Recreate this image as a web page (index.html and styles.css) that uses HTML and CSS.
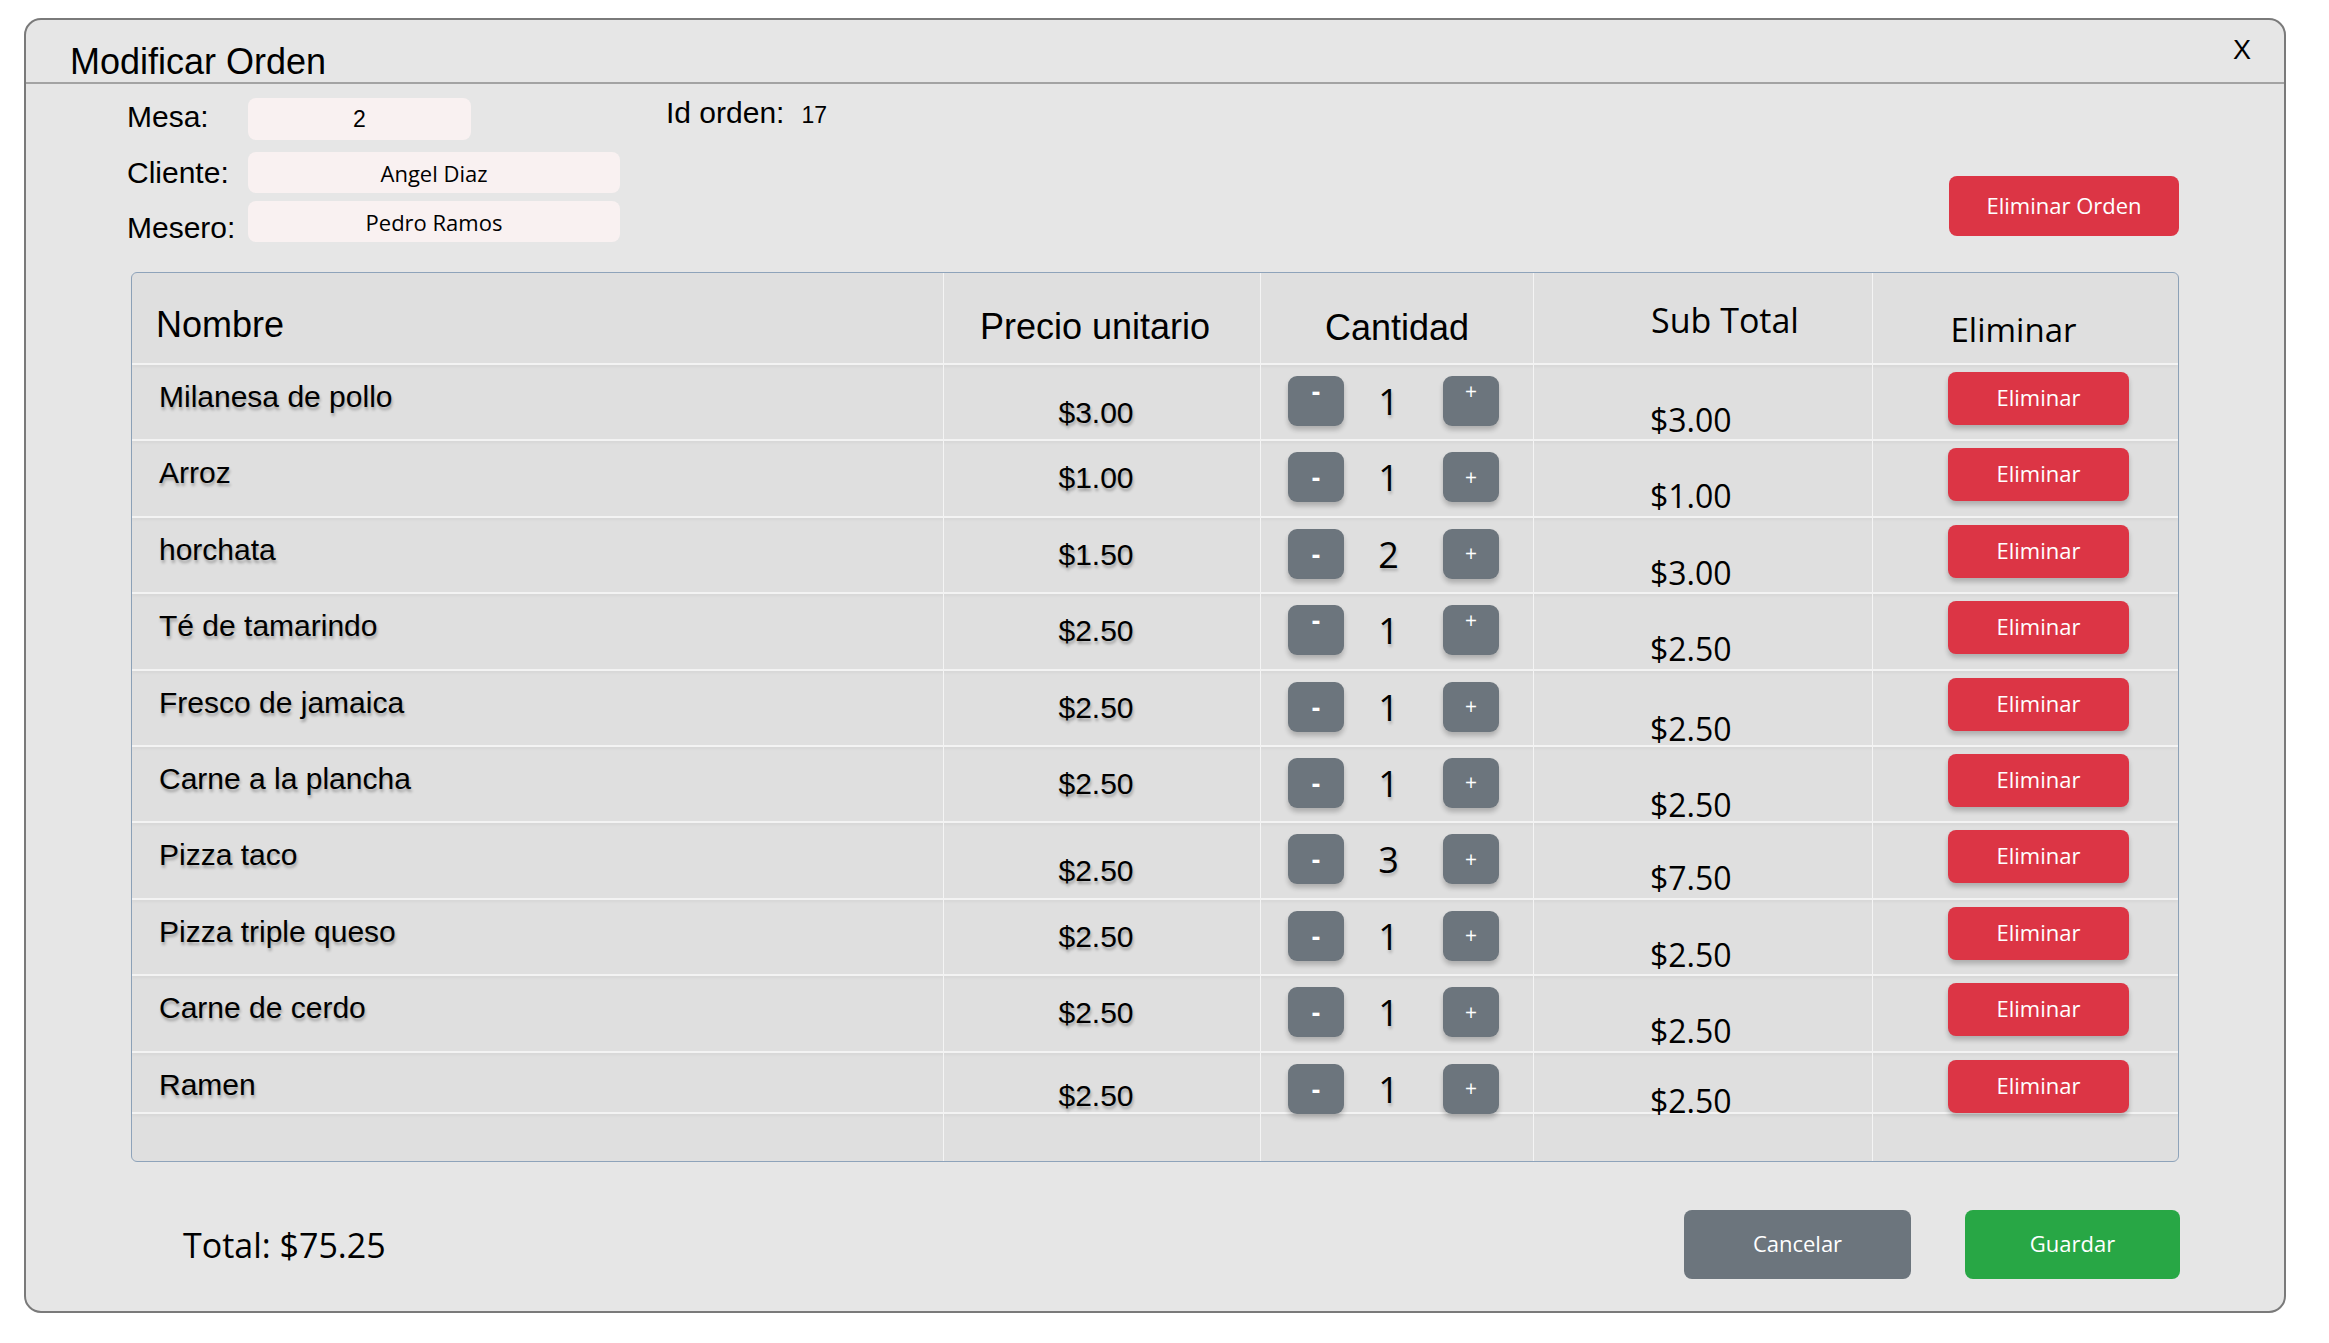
FILE: index.html
```html
<!DOCTYPE html>
<html lang="es">
<head>
<meta charset="utf-8">
<title>Modificar Orden</title>
<link rel="stylesheet" href="styles.css">
</head>
<body>
<div class="modal">
  <header class="modal-header">
    <h1 class="modal-title">Modificar Orden</h1>
    <span class="modal-close">X</span>
  </header>

  <section class="info">
    <div class="fields">
      <div class="field">
        <span class="field-label field-label--high">Mesa:</span>
        <span class="field-input field-input--short">2</span>
      </div>
      <div class="field field--gap-lg">
        <span class="field-label">Cliente:</span>
        <span class="field-input">Angel Diaz</span>
      </div>
      <div class="field field--gap-sm">
        <span class="field-label field-label--low">Mesero:</span>
        <span class="field-input">Pedro Ramos</span>
      </div>
    </div>
    <div class="order-id">
      <span class="order-id-label">Id orden:</span>
      <span class="order-id-value">17</span>
    </div>
    <button class="btn btn--danger btn--order">Eliminar Orden</button>
  </section>

  <div class="table">
    <div class="row row--head">
      <div class="cell"><span class="th th--name">Nombre</span></div>
      <div class="cell cell--center"><span class="th th--price">Precio unitario</span></div>
      <div class="cell cell--center"><span class="th th--qty">Cantidad</span></div>
      <div class="cell cell--center"><span class="th th--sub">Sub Total</span></div>
      <div class="cell cell--center"><span class="th th--del">Eliminar</span></div>
    </div>

    <div class="row">
      <div class="cell cell--name">Milanesa de pollo</div>
      <div class="cell cell--price cell--price-low">$3.00</div>
      <div class="cell cell--qty">
        <button class="qbtn qbtn--minus qbtn--top">-</button><span class="qnum">1</span><button class="qbtn qbtn--top">+</button>
      </div>
      <div class="cell cell--sub">$3.00</div>
      <div class="cell cell--del"><button class="btn btn--danger btn--row">Eliminar</button></div>
    </div>

    <div class="row">
      <div class="cell cell--name">Arroz</div>
      <div class="cell cell--price">$1.00</div>
      <div class="cell cell--qty">
        <button class="qbtn qbtn--minus">-</button><span class="qnum">1</span><button class="qbtn">+</button>
      </div>
      <div class="cell cell--sub">$1.00</div>
      <div class="cell cell--del"><button class="btn btn--danger btn--row">Eliminar</button></div>
    </div>

    <div class="row">
      <div class="cell cell--name">horchata</div>
      <div class="cell cell--price">$1.50</div>
      <div class="cell cell--qty">
        <button class="qbtn qbtn--minus">-</button><span class="qnum">2</span><button class="qbtn">+</button>
      </div>
      <div class="cell cell--sub">$3.00</div>
      <div class="cell cell--del"><button class="btn btn--danger btn--row">Eliminar</button></div>
    </div>

    <div class="row">
      <div class="cell cell--name">Té de tamarindo</div>
      <div class="cell cell--price">$2.50</div>
      <div class="cell cell--qty">
        <button class="qbtn qbtn--minus qbtn--top">-</button><span class="qnum">1</span><button class="qbtn qbtn--top">+</button>
      </div>
      <div class="cell cell--sub">$2.50</div>
      <div class="cell cell--del"><button class="btn btn--danger btn--row">Eliminar</button></div>
    </div>

    <div class="row">
      <div class="cell cell--name">Fresco de jamaica</div>
      <div class="cell cell--price">$2.50</div>
      <div class="cell cell--qty">
        <button class="qbtn qbtn--minus">-</button><span class="qnum">1</span><button class="qbtn">+</button>
      </div>
      <div class="cell cell--sub cell--sub-low">$2.50</div>
      <div class="cell cell--del"><button class="btn btn--danger btn--row">Eliminar</button></div>
    </div>

    <div class="row">
      <div class="cell cell--name">Carne a la plancha</div>
      <div class="cell cell--price">$2.50</div>
      <div class="cell cell--qty">
        <button class="qbtn qbtn--minus">-</button><span class="qnum">1</span><button class="qbtn">+</button>
      </div>
      <div class="cell cell--sub cell--sub-low">$2.50</div>
      <div class="cell cell--del"><button class="btn btn--danger btn--row">Eliminar</button></div>
    </div>

    <div class="row">
      <div class="cell cell--name">Pizza taco</div>
      <div class="cell cell--price cell--price-low">$2.50</div>
      <div class="cell cell--qty">
        <button class="qbtn qbtn--minus">-</button><span class="qnum">3</span><button class="qbtn">+</button>
      </div>
      <div class="cell cell--sub">$7.50</div>
      <div class="cell cell--del"><button class="btn btn--danger btn--row">Eliminar</button></div>
    </div>

    <div class="row">
      <div class="cell cell--name">Pizza triple queso</div>
      <div class="cell cell--price">$2.50</div>
      <div class="cell cell--qty">
        <button class="qbtn qbtn--minus">-</button><span class="qnum">1</span><button class="qbtn">+</button>
      </div>
      <div class="cell cell--sub">$2.50</div>
      <div class="cell cell--del"><button class="btn btn--danger btn--row">Eliminar</button></div>
    </div>

    <div class="row">
      <div class="cell cell--name">Carne de cerdo</div>
      <div class="cell cell--price">$2.50</div>
      <div class="cell cell--qty">
        <button class="qbtn qbtn--minus">-</button><span class="qnum">1</span><button class="qbtn">+</button>
      </div>
      <div class="cell cell--sub">$2.50</div>
      <div class="cell cell--del"><button class="btn btn--danger btn--row">Eliminar</button></div>
    </div>

    <div class="row row--last">
      <div class="cell cell--name">Ramen</div>
      <div class="cell cell--price">$2.50</div>
      <div class="cell cell--qty">
        <button class="qbtn qbtn--minus">-</button><span class="qnum">1</span><button class="qbtn">+</button>
      </div>
      <div class="cell cell--sub">$2.50</div>
      <div class="cell cell--del"><button class="btn btn--danger btn--row">Eliminar</button></div>
    </div>

    <div class="row row--filler">
      <div class="cell"></div>
      <div class="cell"></div>
      <div class="cell"></div>
      <div class="cell"></div>
      <div class="cell"></div>
    </div>
  </div>

  <footer class="footer">
    <span class="total">Total: $75.25</span>
    <div class="actions">
      <button class="btn btn--secondary btn--cancel">Cancelar</button>
      <button class="btn btn--success btn--save">Guardar</button>
    </div>
  </footer>
</div>
</body>
</html>
```

FILE: styles.css
```css
* { box-sizing: border-box; }

html, body {
  margin: 0;
  background: #ffffff;
}

body {
  padding: 18px 0 0 24px;
  font-family: "Liberation Sans", Arial, sans-serif;
  color: #000;
}

.modal {
  width: 2262px;
  height: 1295px;
  background: #e6e6e6;
  border: 2px solid #7a7a7a;
  border-radius: 17px;
  display: flex;
  flex-direction: column;
}

/* Header */
.modal-header {
  display: flex;
  justify-content: space-between;
  align-items: flex-start;
  height: 64px;
  padding: 16px 33px 0 44px;
  border-bottom: 2px solid #a3a3a3;
}

.modal-title {
  margin: 8px 0 0 0;
  font-family: "Liberation Sans", Arial, sans-serif;
  font-weight: 400;
  font-size: 36px;
  line-height: 36px;
}

.modal-close {
  margin-top: 1px;
  font-size: 27px;
  line-height: 27px;
}

/* Info */
.info {
  display: flex;
  align-items: flex-start;
  padding: 14px 105px 0 101px;
}

.fields {
  display: flex;
  flex-direction: column;
}

.field {
  display: flex;
  align-items: center;
  height: 42px;
}

.field--gap-lg { margin-top: 12px; height: 41px; }
.field--gap-sm { margin-top: 8px; height: 41px; }

.field-label {
  width: 121px;
  font-size: 30px;
  line-height: 30px;
}

.field-label--high { margin-bottom: 4px; }
.field-label--low { margin-top: 12px; }

.field-input {
  width: 372px;
  height: 100%;
  background: #f9f1f1;
  border-radius: 8px;
  display: flex;
  align-items: center;
  justify-content: center;
  font-family: "Open Sans", sans-serif;
  font-size: 22px;
}

.field-input--short {
  width: 223px;
  font-family: "Liberation Sans", Arial, sans-serif;
  font-size: 23px;
}

.order-id {
  display: flex;
  align-items: baseline;
  margin-left: 46px;
}

.order-id-label {
  font-size: 30px;
  line-height: 30px;
}

.order-id-value {
  margin-left: 17px;
  font-size: 23px;
}

/* Buttons */
.btn {
  border: none;
  border-radius: 8px;
  color: #ffffff;
  font-family: "Open Sans", sans-serif;
  font-size: 22px;
  padding: 0 0 3px 0;
  cursor: pointer;
}

.btn--danger { background: #dc3545; }
.btn--secondary { background: #6c757d; }
.btn--success { background: #28a745; }

.btn--order {
  margin-left: auto;
  margin-top: 78px;
  width: 230px;
  height: 60px;
}

.btn--row {
  width: 181px;
  height: 53px;
  box-shadow: 0 4px 5px rgba(0, 0, 0, 0.22);
}

/* Table */
.table {
  margin: 30px 105px 0 105px;
  height: 890px;
  background: #dfdfdf;
  border: 1px solid #8ea3ba;
  border-radius: 6px;
  display: flex;
  flex-direction: column;
}

.row {
  display: grid;
  grid-template-columns: 811px 317px 273px 339px 1fr;
  height: 76.4px;
  flex: none;
  border-bottom: 2px solid #f3f3f3;
  box-shadow: 0 2px 3px rgba(0, 0, 0, 0.04);
}

.row--head { height: 92px; }
.row--last { height: 61px; }

.row--filler {
  flex: 1;
  border-bottom: none;
  box-shadow: none;
}

.cell {
  border-left: 1px solid #f4f4f4;
}

.cell:first-child { border-left: none; }

.cell--center { text-align: center; }

.th {
  display: inline-block;
  line-height: 1;
}

.th--name {
  font-size: 36px;
  padding: 34px 0 0 24px;
}

.th--price {
  font-size: 36px;
  padding-top: 36px;
  margin-right: 14px;
}

.th--qty {
  font-size: 36px;
  padding-top: 37px;
}

.th--sub {
  font-family: "Open Sans", sans-serif;
  font-size: 34px;
  padding-top: 30px;
  margin-left: 44px;
}

.th--del {
  font-family: "Open Sans", sans-serif;
  font-size: 33px;
  padding-top: 40px;
  margin-right: 24px;
}

.cell--name {
  font-size: 30px;
  line-height: 30px;
  padding: 17px 0 0 27px;
  text-shadow: 1px 3px 3px rgba(0, 0, 0, 0.28);
}

.cell--price {
  font-size: 30px;
  line-height: 30px;
  text-align: center;
  padding: 22px 12px 0 0;
  text-shadow: 1px 3px 3px rgba(0, 0, 0, 0.28);
}

.cell--price-low { padding-top: 33px; }
.row--last .cell--price { padding-top: 28px; }

.cell--qty {
  display: flex;
  align-items: flex-start;
  padding-left: 27px;
}

.qbtn {
  width: 56px;
  height: 50px;
  margin-top: 11px;
  border: none;
  border-radius: 9px;
  background: #6c757d;
  color: #ffffff;
  font-family: "Open Sans", sans-serif;
  font-size: 21px;
  line-height: 21px;
  padding: 0;
  display: flex;
  align-items: center;
  justify-content: center;
  box-shadow: 0 4px 5px rgba(0, 0, 0, 0.22);
  flex: none;
}

.qbtn--minus {
  font-size: 26px;
  line-height: 26px;
  font-weight: 700;
}

.qbtn--top {
  align-items: flex-start;
  padding-top: 5px;
}

.qbtn--minus.qbtn--top { padding-top: 2px; }

.qnum {
  width: 89px;
  margin-right: 10px;
  text-align: center;
  margin-top: 19px;
  font-family: "Open Sans", sans-serif;
  font-size: 36px;
  line-height: 36px;
  text-shadow: 1px 3px 3px rgba(0, 0, 0, 0.2);
}

.cell--sub {
  font-family: "Open Sans", sans-serif;
  font-size: 32px;
  line-height: 32px;
  padding: 39px 0 0 116px;
}

.cell--sub-low { padding-top: 42px; }
.row--last .cell--sub { padding-top: 32px; }

.cell--del {
  padding: 7px 0 0 75px;
}

/* Footer */
.footer {
  display: flex;
  align-items: center;
  justify-content: space-between;
  margin-top: 48px;
  height: 69px;
  padding: 0 104px 0 157px;
}

.total {
  font-family: "Open Sans", sans-serif;
  font-size: 34px;
  line-height: 34px;
}

.actions {
  display: flex;
  gap: 54px;
}

.btn--cancel {
  width: 227px;
  height: 69px;
}

.btn--save {
  width: 215px;
  height: 69px;
}
```
